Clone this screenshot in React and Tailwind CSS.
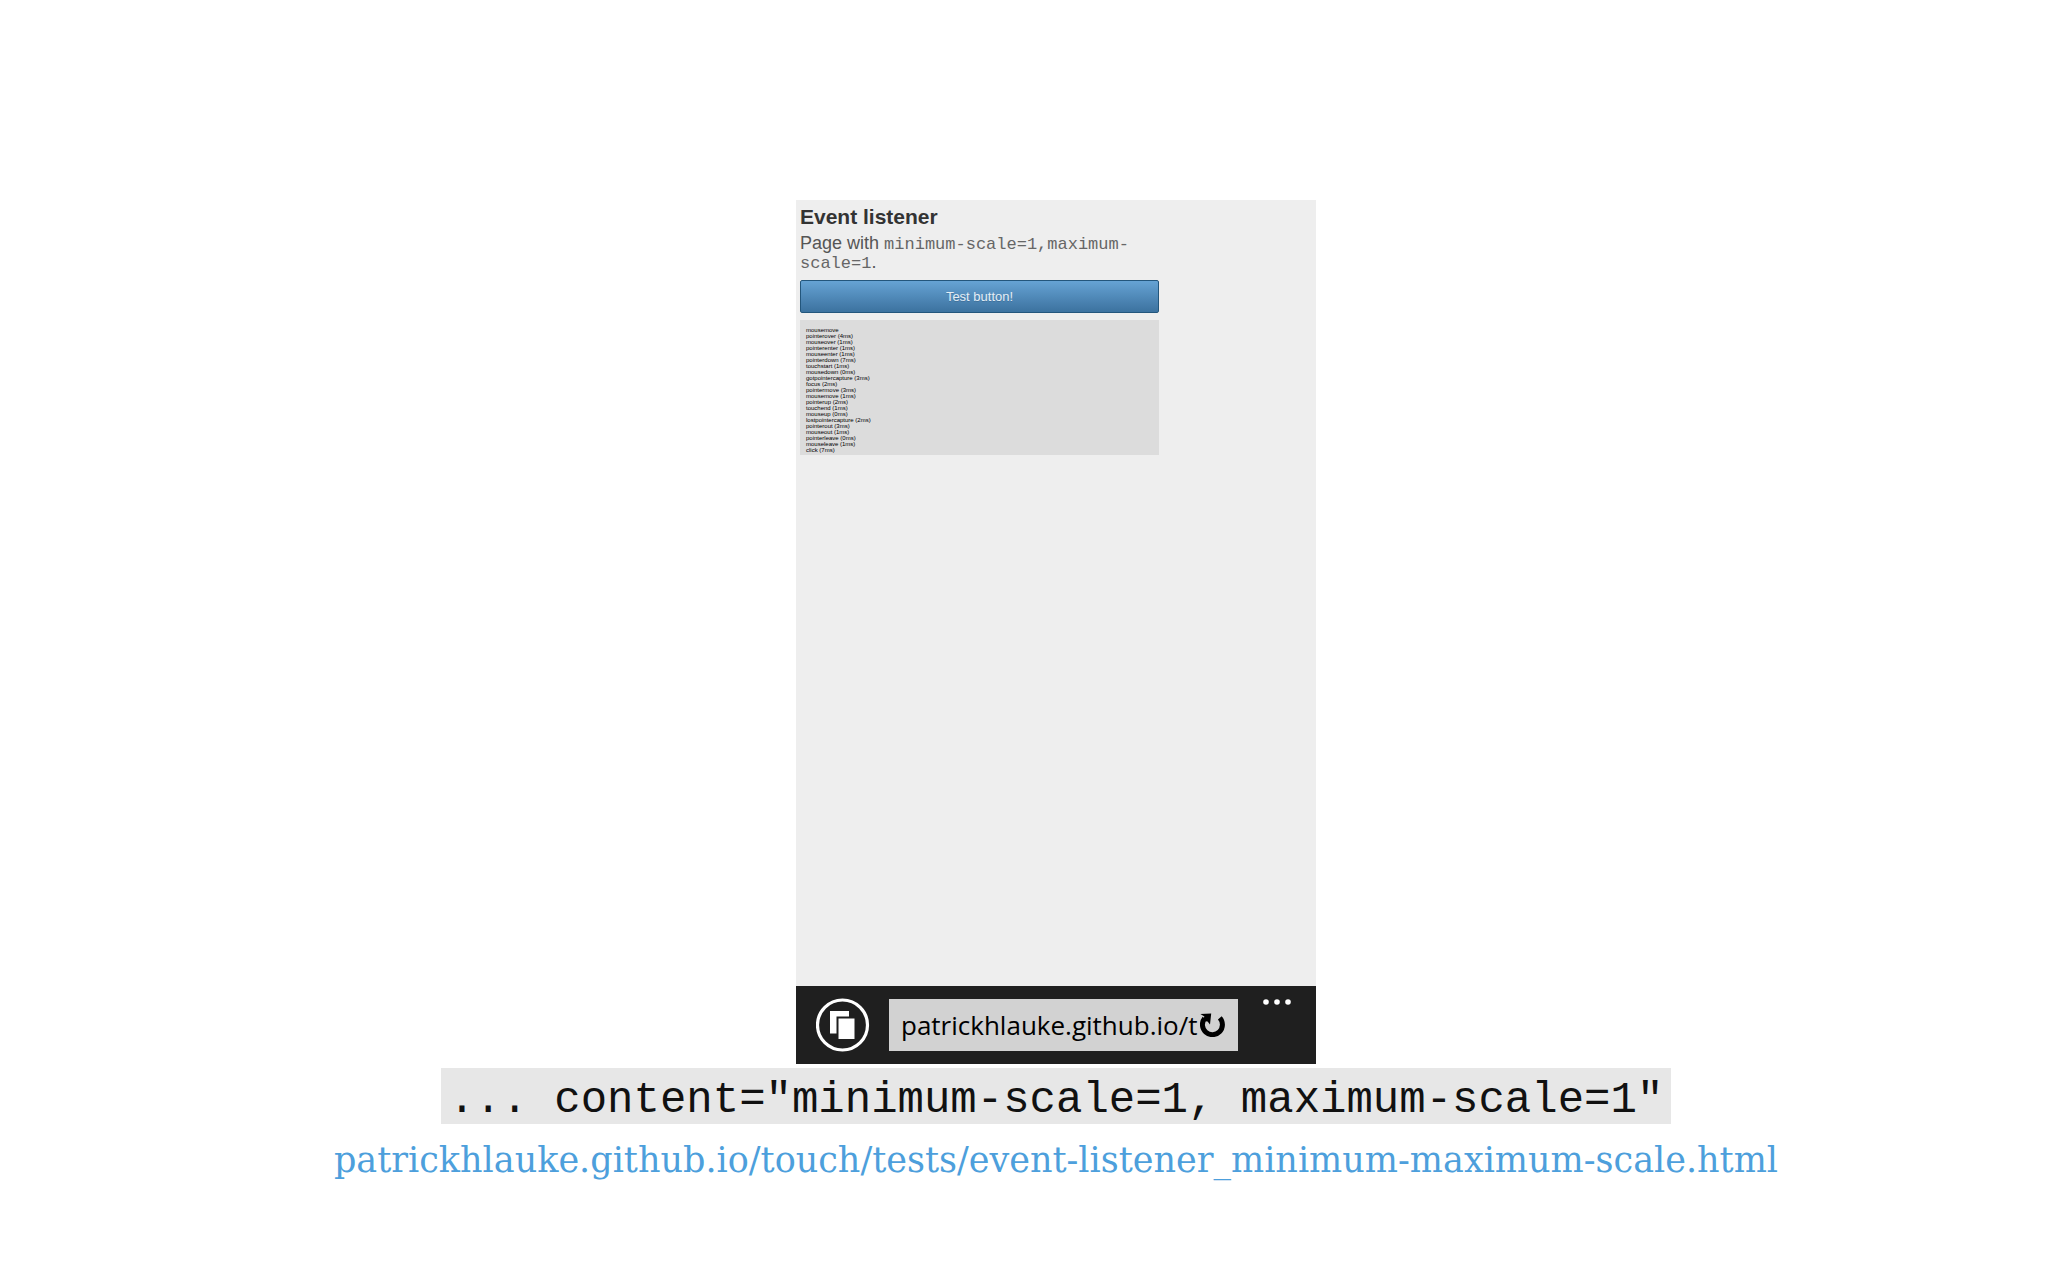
const events = [
    "mousemove",
    "pointerover (4ms)",
    "mouseover (1ms)",
    "pointerenter (1ms)",
    "mouseenter (1ms)",
    "pointerdown (7ms)",
    "touchstart (1ms)",
    "mousedown (0ms)",
    "gotpointercapture (3ms)",
    "focus (2ms)",
    "pointermove (3ms)",
    "mousemove (1ms)",
    "pointerup (2ms)",
    "touchend (1ms)",
    "mouseup (0ms)",
    "lostpointercapture (2ms)",
    "pointerout (3ms)",
    "mouseout (1ms)",
    "pointerleave (0ms)",
    "mouseleave (1ms)",
    "click (7ms)"
];

function TabsIcon() {
    return (
        <svg className="size-[54px]" viewBox="0 0 54 54" aria-hidden="true">
            <circle cx="26.5" cy="27" r="25" fill="none" stroke="#fff" strokeWidth="3.2" />
            <path d="M14 13H33V18.5H20.5V35.5H14Z" fill="#fff" />
            <path d="M22.5 20.5H38.5V41H22.5Z" fill="#fff" />
        </svg>
    );
}

function RefreshIcon() {
    return (
        <svg className="h-6 w-[26px]" viewBox="0 0 26 24" aria-hidden="true">
            <path d="M19.8 4.9A10 10 0 1 1 4.6 5.4" fill="none" stroke="#000" strokeWidth="5" />
            <path d="M0.4 1L11.2 0.4L10 11.6L7.6 8.4L2.6 8L4.4 3.4Z" fill="#000" />
        </svg>
    );
}

function TestPage() {
    return (
        <div className="flex-1 p-1 pt-[5px] text-[#333]">

            <h1 className="text-[21px] leading-6 font-bold">
                Event listener
            </h1>

            <div className="w-[359px]">

                <p className="pt-[5px] pb-2 text-[18px] leading-[19px] text-[#555]">
                    Page with{" "}
                    <code className="font-['Liberation_Mono',monospace] text-[17px] leading-[10px] text-[#666]">
                        minimum-scale=1,maximum-<br />scale=1
                    </code>
                    .
                </p>

                <button
                    type="button"
                    className="block h-[33px] w-full rounded-xs border border-[#23567c] bg-linear-to-b from-[#66a3d4] to-[#3c729f] text-[13px] text-[#e4eef6] text-shadow-2xs"
                >
                    Test button!
                </button>

                <ul className="mt-[7px] bg-[#dcdcdc] px-[6px] pt-[7px] pb-[2px] text-[6px] leading-[6px] text-black">
                    {events.map((name, i) => (
                        <li key={i}>{name}</li>
                    ))}
                </ul>

            </div>

        </div>
    );
}

function BrowserBar() {
    return (
        <div className="flex h-[78px] items-center bg-[#1f1f1f] pl-5 pr-6">

            <button type="button" aria-label="Tabs">
                <TabsIcon />
            </button>

            <div className="ml-[19px] flex h-[52px] min-w-0 flex-1 items-center bg-[#d2d2d2] px-3">
                <input
                    type="text"
                    aria-label="Address"
                    defaultValue="patrickhlauke.github.io/t"
                    className="min-w-0 flex-1 font-['Open_Sans',sans-serif] text-[26px] text-black outline-none"
                />
                <button type="button" aria-label="Refresh">
                    <RefreshIcon />
                </button>
            </div>

            <button type="button" aria-label="More" className="ml-6 self-start pt-[13px]">
                <svg className="h-[6px] w-[30px]" viewBox="0 0 30 6" aria-hidden="true">
                    <circle cx="4" cy="3" r="2.8" fill="#fff" />
                    <circle cx="15" cy="3" r="2.8" fill="#fff" />
                    <circle cx="26" cy="3" r="2.8" fill="#fff" />
                </svg>
            </button>

        </div>
    );
}

function App() {
    return (

        <main className="flex min-h-screen flex-col items-center bg-white pt-[200px] pl-16 font-['Liberation_Sans',sans-serif]">

            <section className="flex min-h-[864px] w-[520px] flex-col bg-[#eee]">
                <TestPage />
                <BrowserBar />
            </section>

            <code className="mt-1 bg-[#e7e7e7] px-2 pt-2 font-['Liberation_Mono',monospace] text-[44px] leading-12 text-[#111]">
                ... content="minimum-scale=1, maximum-scale=1"
            </code>

            <a
                href="https://patrickhlauke.github.io/touch/tests/event-listener_minimum-maximum-scale.html"
                className="mt-3 font-['DejaVu_Serif',serif] text-[35px] leading-12 text-[#4d9fdc]"
            >
                patrickhlauke.github.io/touch/tests/event-listener_minimum-maximum-scale.html
            </a>

        </main>

    );
}

export default App;
